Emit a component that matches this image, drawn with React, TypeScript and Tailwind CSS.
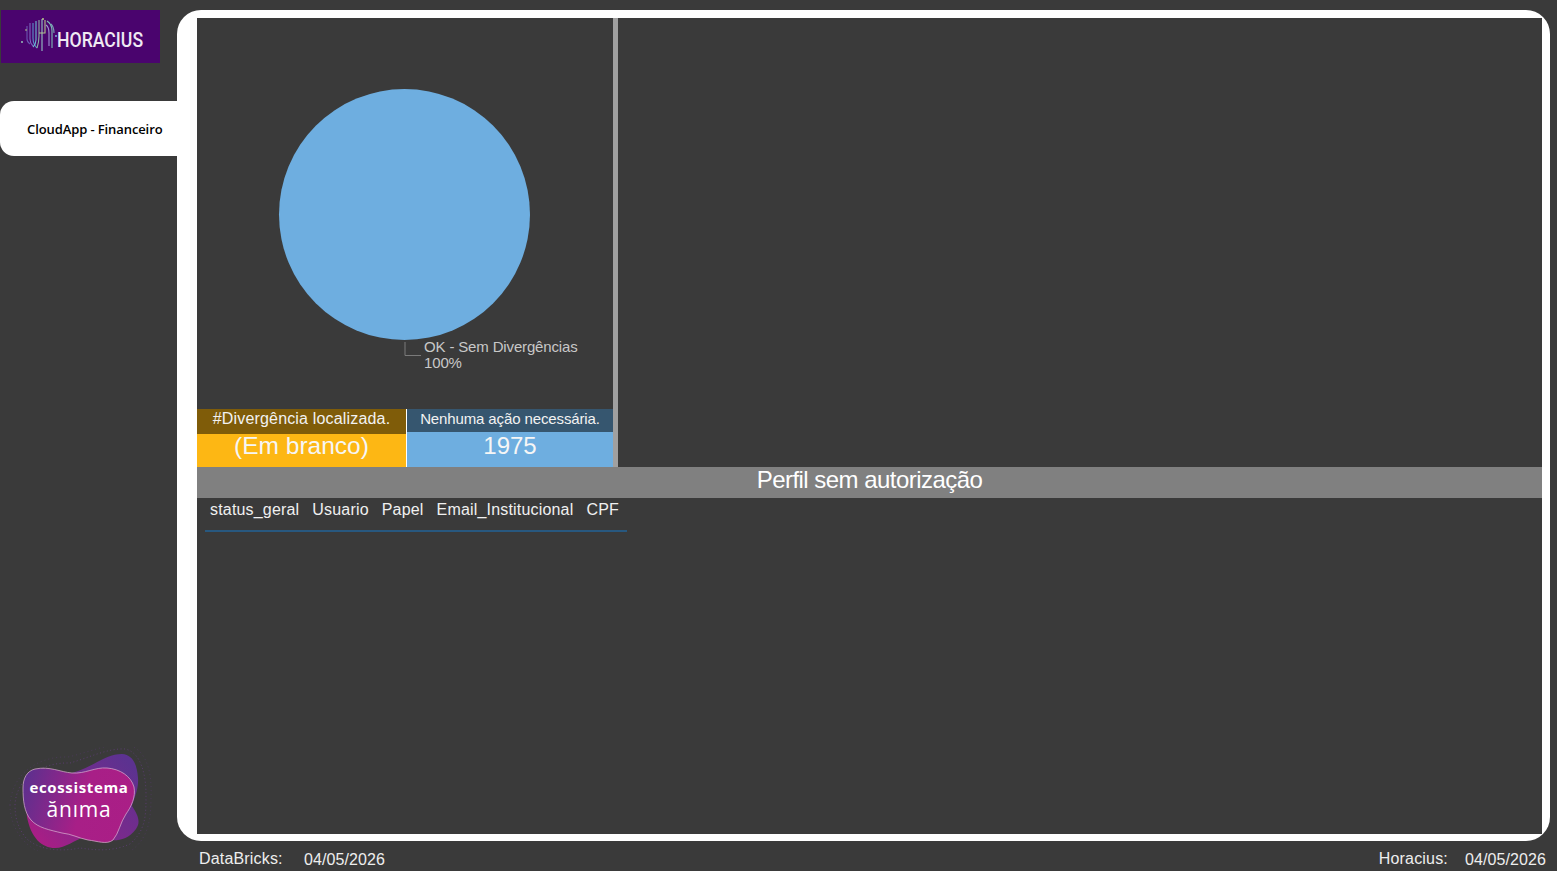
const sans = "font-['Liberation_Sans',Arial,sans-serif]";

function HoraciusLogo() {
  const lines = [
    { d: "M27 27v13q0 3 3 5", c: "#6d5bb5" },
    { d: "M30 24v16q0 4 3 7", c: "#7d6cc4" },
    { d: "M33 24v15q0 6 4 10", c: "#5c9ad0" },
    { d: "M36 22v19q0 4-3 7", c: "#6fc3d8" },
    { d: "M39 21v16q0 6-2 12", c: "#8fb9a8" },
    { d: "M42 20v32", c: "#9ad0c9" },
    { d: "M45 21v13h-6", c: "#b9cf8c" },
    { d: "M47 22q5 3 5 10v17", c: "#7fc7bb" },
    { d: "M46 26q3 2 3 8v13", c: "#a19ad8" },
    { d: "M51 25q3 3 3 9", c: "#7ca6b8" },
  ];
  return (
    <div className="ml-px mt-[10px] flex h-[53px] w-[159px] items-center bg-[#4a046e]">
      <svg width="56" height="53" viewBox="1 11 56 53" className="shrink-0" fill="none">
        {lines.map((l, i) => (
          <path key={i} d={l.d} stroke={l.c} strokeWidth="1.1" opacity="0.95" />
        ))}
        <circle cx="22" cy="43" r="0.9" fill="#9fd4c0" />
        <circle cx="26" cy="31" r="0.8" fill="#c3d98a" />
        <circle cx="43" cy="20" r="0.9" fill="#c3d98a" />
        <circle cx="56" cy="37" r="0.9" fill="#7fc9e0" />
      </svg>
      <span className="origin-left translate-y-[4px] font-['Roboto',sans-serif] text-[21px] font-medium leading-none text-[#efe9f3] [transform:scaleX(0.84)]">
        HORACIUS
      </span>
    </div>
  );
}

function AnimaLogo() {
  const back =
    "M27 817C24 790 50 780 72 773C92 768 105 754 122 754C134 755 137 766 138 778C139 790 133 800 132 806C138 815 141 822 136 829C128 840 118 841 108 840C98 840 92 836 85 837C74 840 66 848 55 848C42 848 31 838 27 817Z";
  const front =
    "M35 769C50 766 60 772 72 773C85 774 95 767 107 768C120 769 131 776 134 787C136 797 131 807 126 814C120 823 119 833 113 840C107 845 97 841 88 840C78 838 72 834 62 833C50 830 38 828 31 820C24 812 23 800 23 788C23 778 27 771 35 769Z";
  return (
    <div className="relative h-[104px] w-[150px]">
      <svg width="150" height="104" viewBox="4 747 150 104" className="absolute left-0 top-0" fill="none">
        <defs>
          <linearGradient id="g1" x1="0" y1="0.3" x2="1" y2="0.5">
            <stop offset="0" stopColor="#5f2f8e" />
            <stop offset="0.55" stopColor="#a81f87" />
            <stop offset="1" stopColor="#aa1e86" />
          </linearGradient>
          <linearGradient id="g2" x1="0" y1="1" x2="1" y2="0.2">
            <stop offset="0" stopColor="#b31b84" />
            <stop offset="0.55" stopColor="#7a2a8c" />
            <stop offset="1" stopColor="#5c3290" />
          </linearGradient>
        </defs>
        <path d="M15 805C16 778 42 762 70 763C88 758 108 748 125 749C141 752 146 775 146 795C146 815 146 830 130 844C112 852 95 850 80 848C60 852 38 850 26 838C18 828 15 818 15 805Z" stroke="#6f3d92" strokeWidth="0.8" strokeDasharray="1 2.5" opacity="0.75" />
        <path d="M10 805C12 772 40 756 68 757C90 752 108 743 128 745C148 750 152 775 151 797C151 820 148 838 132 850" stroke="#5a3a74" strokeWidth="0.7" strokeDasharray="1 3" opacity="0.7" />
        <path d="M10 805C10 825 22 845 40 852" stroke="#5a3a74" strokeWidth="0.7" strokeDasharray="1 3" opacity="0.7" />
        <path d={back} fill="url(#g2)" />
        <path d={front} fill="url(#g1)" stroke="#dcb3d3" strokeWidth="0.7" />
      </svg>
      <div className="absolute left-[20px] top-[33px] w-[110px] text-center font-['Open_Sans',sans-serif] text-[15px] font-bold leading-none tracking-[0.65px] text-white">
        ecossistema
      </div>
      <div className="absolute left-[20px] top-[52px] w-[110px] text-center font-['Open_Sans',sans-serif] text-[21px] font-normal leading-none tracking-[0.8px] text-white">
        ănıma
      </div>
    </div>
  );
}

function Pie() {
  return (
    <div className="relative h-[391px] w-full">
      <div className="absolute left-[82px] top-[71px] h-[251px] w-[251px] rounded-full bg-[#6eaee0]" />
      <svg width="18" height="16" viewBox="0 0 18 16" className="absolute left-[207px] top-[323px]" fill="none">
        <path d="M1 1V14.5H17" stroke="#7a7a7a" strokeWidth="1" />
      </svg>
      <div className="absolute left-[227px] top-[321px] text-[15px] leading-[16px] tracking-[-0.15px] text-[#c8c8c8]">
        OK - Sem Divergências
        <br />
        100%
      </div>
    </div>
  );
}

export default function App() {
  return (
    <div className={`flex h-[871px] w-full overflow-hidden bg-[#3a3a3a] ${sans}`}>
      <aside className="flex h-full w-[177px] shrink-0 flex-col">
        <HoraciusLogo />
        <div className="mt-[38px] flex h-[55px] items-center rounded-l-[14px] bg-white pl-[27px] pt-[3px] font-['Open_Sans',sans-serif] text-[13px] font-semibold tracking-[-0.1px] text-black">
          CloudApp - Financeiro
        </div>
        <div className="mb-[20px] ml-[4px] mt-auto">
          <AnimaLogo />
        </div>
      </aside>
      <main className="flex w-[1373px] shrink-0 flex-col pt-[10px]">
        <div className="h-[831px] rounded-[24px] bg-white pb-[7px] pl-[20px] pr-[8px] pt-[8px]">
          <div className="flex h-full w-full flex-col bg-[#3a3a3a]">
            <div className="flex h-[449px] shrink-0">
              <div className="flex w-[416px] shrink-0 flex-col">
                <Pie />
                <div className="flex h-[58px]">
                  <div className="flex w-[210px] flex-col border-r border-white">
                    <div className="flex h-[25px] shrink-0 items-center justify-center bg-[#7f5c09] pb-[5px] text-[16px] leading-none tracking-[0.17px] text-[#f2f2f2]">
                      #Divergência localizada.
                    </div>
                    <div className="flex min-h-0 flex-1 items-center justify-center bg-[#fdb714] pb-[8px] text-[24.5px] leading-none text-[#f6f6f6]">
                      (Em branco)
                    </div>
                  </div>
                  <div className="flex flex-1 flex-col">
                    <div className="flex h-[23px] shrink-0 items-center justify-center bg-[#36566f] pb-[4px] text-[15px] leading-none tracking-[-0.12px] text-[#f2f2f2]">
                      Nenhuma ação necessária.
                    </div>
                    <div className="flex min-h-0 flex-1 items-center justify-center bg-[#6eaee0] pb-[7px] text-[24px] leading-none text-[#f6f6f6]">
                      1975
                    </div>
                  </div>
                </div>
              </div>
              <div className="w-[5px] shrink-0 bg-[#a0a0a0]" />
            </div>
            <div className="flex h-[31px] shrink-0 items-center justify-center bg-[#808080] pb-[6px] text-[24px] leading-none tracking-[-0.54px] text-white">
              Perfil sem autorização
            </div>
            <div className="ml-[8px] flex h-[34px] w-[422px] items-start border-b-2 border-[#28587f] pl-[5px] pt-[2px] text-[16px] leading-[20px] tracking-[0.18px] text-[#f0f0f0]">
              <span className="mr-[13px]">status_geral</span>
              <span className="mr-[13px]">Usuario</span>
              <span className="mr-[13px]">Papel</span>
              <span className="mr-[13px]">Email_Institucional</span>
              <span>CPF</span>
            </div>
          </div>
        </div>
        <div className="flex h-[30px] items-center justify-between pl-[22px] pr-[4px] pt-[6px] text-[16px] leading-none text-[#eeeeee]">
          <div className="flex">
            <span className="w-[105px] tracking-[0.17px]">DataBricks:</span>
            <span className="translate-y-px tracking-[0.1px]">04/05/2026</span>
          </div>
          <div className="flex">
            <span className="mr-[17px] tracking-[0.17px]">Horacius:</span>
            <span className="translate-y-px tracking-[0.1px]">04/05/2026</span>
          </div>
        </div>
      </main>
    </div>
  );
}
